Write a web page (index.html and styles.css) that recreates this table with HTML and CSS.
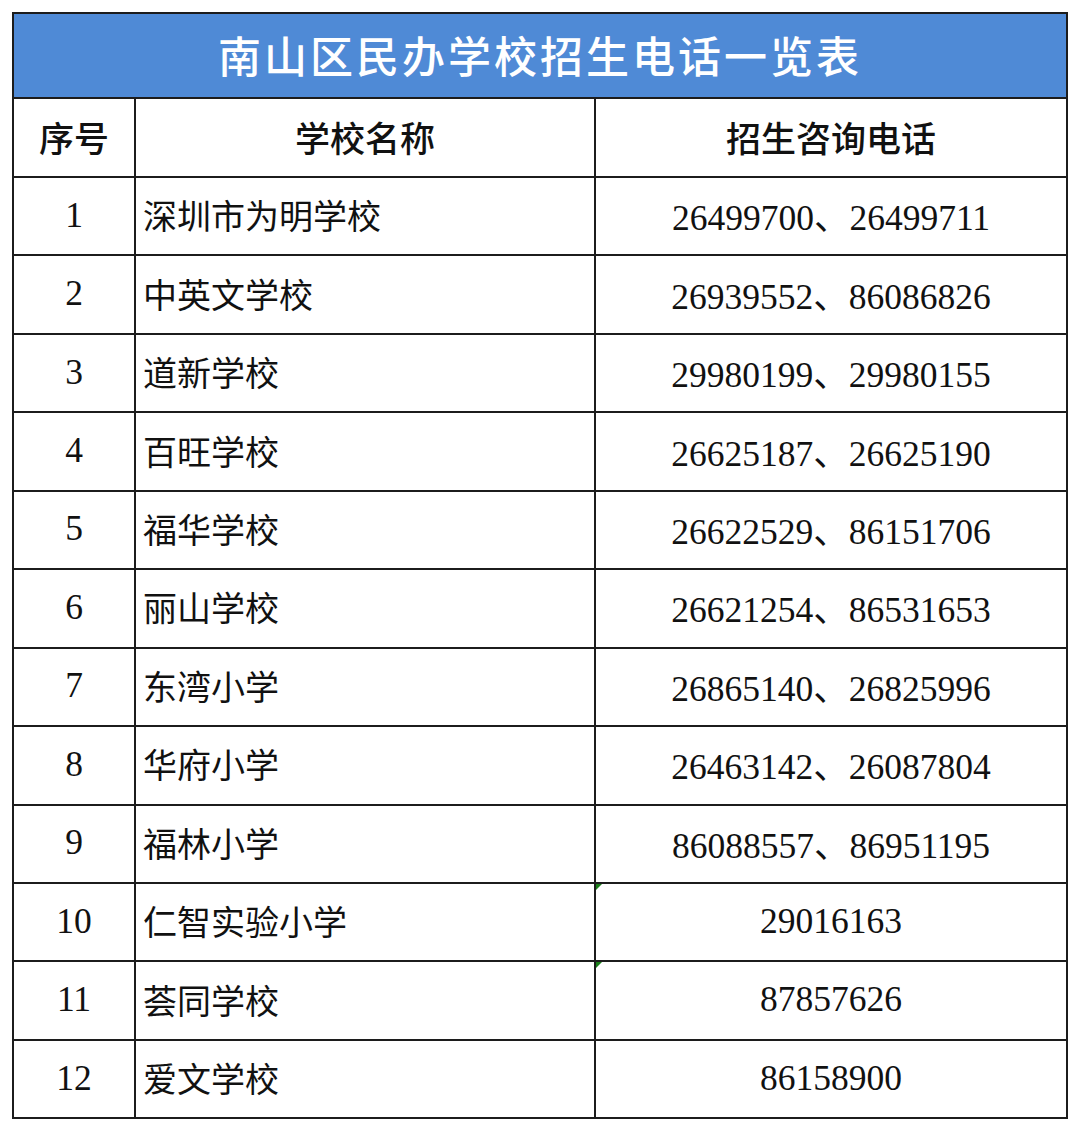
FILE: index.html
```html
<!DOCTYPE html>
<html lang="zh-CN">
<head>
<meta charset="utf-8">
<title>南山区民办学校招生电话一览表</title>
<link rel="stylesheet" href="styles.css">
</head>
<body>
<div class="page">
<table class="sheet">
  <colgroup>
    <col class="c-no">
    <col class="c-name">
    <col class="c-tel">
  </colgroup>
  <thead>
    <tr class="title-row"><th colspan="3">南山区民办学校招生电话一览表</th></tr>
    <tr class="head-row"><th>序号</th><th>学校名称</th><th>招生咨询电话</th></tr>
  </thead>
  <tbody>
    <tr><td class="no">1</td><td class="name">深圳市为明学校</td><td class="tel">26499700、26499711</td></tr>
    <tr><td class="no">2</td><td class="name">中英文学校</td><td class="tel">26939552、86086826</td></tr>
    <tr><td class="no">3</td><td class="name">道新学校</td><td class="tel">29980199、29980155</td></tr>
    <tr><td class="no">4</td><td class="name">百旺学校</td><td class="tel">26625187、26625190</td></tr>
    <tr><td class="no">5</td><td class="name">福华学校</td><td class="tel">26622529、86151706</td></tr>
    <tr><td class="no">6</td><td class="name">丽山学校</td><td class="tel">26621254、86531653</td></tr>
    <tr><td class="no">7</td><td class="name">东湾小学</td><td class="tel">26865140、26825996</td></tr>
    <tr><td class="no">8</td><td class="name">华府小学</td><td class="tel">26463142、26087804</td></tr>
    <tr><td class="no">9</td><td class="name">福林小学</td><td class="tel">86088557、86951195</td></tr>
    <tr><td class="no">10</td><td class="name">仁智实验小学</td><td class="tel flag">29016163</td></tr>
    <tr><td class="no">11</td><td class="name">荟同学校</td><td class="tel flag">87857626</td></tr>
    <tr><td class="no">12</td><td class="name">爱文学校</td><td class="tel">86158900</td></tr>
  </tbody>
</table>
</div>
</body>
</html>
```
FILE: styles.css
```css
html, body {
  margin: 0;
  padding: 0;
  background: #ffffff;
}
.page {
  padding: 12px 12px 0 12px;
}
.sheet {
  border-collapse: collapse;
  table-layout: fixed;
  width: 1054px;
  font-family: "Liberation Serif", "Noto Sans CJK SC", serif;
  color: #111111;
}
.c-no { width: 122px; }
.c-name { width: 460px; }
.c-tel { width: 472px; }
.sheet th, .sheet td {
  border: 2px solid #1c1c1c;
  padding: 0 0 3px 0;
  height: 73.45px;
}
.sheet .title-row th {
  height: 80px;
  background: #4f8ad6;
  color: #ffffff;
  font-family: "Noto Sans CJK SC", sans-serif;
  font-weight: 500;
  font-size: 43px;
  letter-spacing: 3px;
  text-align: center;
}
.sheet .head-row th {
  height: 74px;
  font-family: "Noto Sans CJK SC", sans-serif;
  font-weight: 500;
  font-size: 35px;
  text-align: center;
}
.sheet td {
  font-size: 35.5px;
  font-weight: 400;
}
.sheet td.no { text-align: center; }
.sheet td.name {
  text-align: left;
  padding-left: 7px;
  font-family: "Noto Sans CJK SC", sans-serif;
  font-size: 34px;
}
.sheet td.tel { text-align: center; }
.sheet td.flag { position: relative; }
.sheet td.flag::before {
  content: "";
  position: absolute;
  left: 0;
  top: 0;
  width: 0;
  height: 0;
  border-top: 6px solid #1a7f1a;
  border-right: 6px solid transparent;
}
```
